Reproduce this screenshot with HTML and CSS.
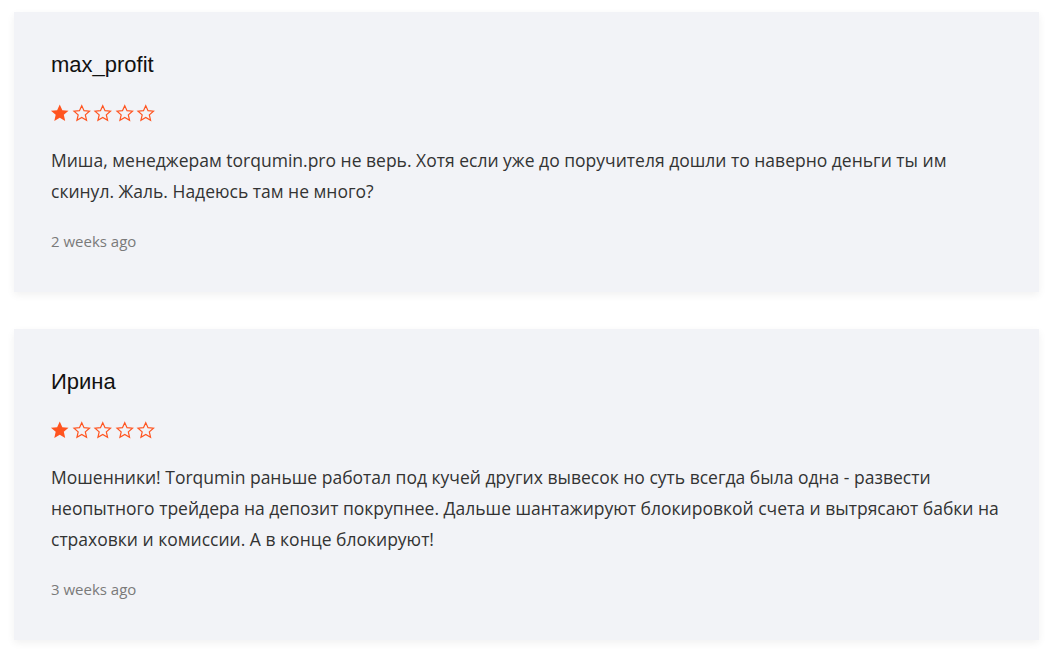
FILE: index.html
```html
<!DOCTYPE html>
<html lang="ru">
<head>
<meta charset="utf-8">
<link rel="stylesheet" href="styles.css">
</head>
<body>
<div class="reviews">
  <div class="card">
    <div class="name">max_profit</div>
    <div class="stars">
      <svg class="star" viewBox="0 0 24 24"><path class="full" d="M12 1.5l3.2 7 7.6.7-5.8 5.1 1.7 7.5L12 17.9l-6.7 3.9 1.7-7.5-5.8-5.1 7.6-.7z"/></svg>
      <svg class="star" viewBox="0 0 24 24"><path class="empty" d="M12 3l2.8 6.2 6.7.6-5.1 4.5 1.5 6.6L12 17.5l-5.9 3.4 1.5-6.6-5.1-4.5 6.7-.6z"/></svg>
      <svg class="star" viewBox="0 0 24 24"><path class="empty" d="M12 3l2.8 6.2 6.7.6-5.1 4.5 1.5 6.6L12 17.5l-5.9 3.4 1.5-6.6-5.1-4.5 6.7-.6z"/></svg>
      <svg class="star" viewBox="0 0 24 24"><path class="empty" d="M12 3l2.8 6.2 6.7.6-5.1 4.5 1.5 6.6L12 17.5l-5.9 3.4 1.5-6.6-5.1-4.5 6.7-.6z"/></svg>
      <svg class="star" viewBox="0 0 24 24"><path class="empty" d="M12 3l2.8 6.2 6.7.6-5.1 4.5 1.5 6.6L12 17.5l-5.9 3.4 1.5-6.6-5.1-4.5 6.7-.6z"/></svg>
    </div>
    <p class="text">Миша, менеджерам torqumin.pro не верь. Хотя если уже до поручителя дошли то наверно деньги ты им скинул. Жаль. Надеюсь там не много?</p>
    <div class="time">2 weeks ago</div>
  </div>
  <div class="card">
    <div class="name">Ирина</div>
    <div class="stars">
      <svg class="star" viewBox="0 0 24 24"><path class="full" d="M12 1.5l3.2 7 7.6.7-5.8 5.1 1.7 7.5L12 17.9l-6.7 3.9 1.7-7.5-5.8-5.1 7.6-.7z"/></svg>
      <svg class="star" viewBox="0 0 24 24"><path class="empty" d="M12 3l2.8 6.2 6.7.6-5.1 4.5 1.5 6.6L12 17.5l-5.9 3.4 1.5-6.6-5.1-4.5 6.7-.6z"/></svg>
      <svg class="star" viewBox="0 0 24 24"><path class="empty" d="M12 3l2.8 6.2 6.7.6-5.1 4.5 1.5 6.6L12 17.5l-5.9 3.4 1.5-6.6-5.1-4.5 6.7-.6z"/></svg>
      <svg class="star" viewBox="0 0 24 24"><path class="empty" d="M12 3l2.8 6.2 6.7.6-5.1 4.5 1.5 6.6L12 17.5l-5.9 3.4 1.5-6.6-5.1-4.5 6.7-.6z"/></svg>
      <svg class="star" viewBox="0 0 24 24"><path class="empty" d="M12 3l2.8 6.2 6.7.6-5.1 4.5 1.5 6.6L12 17.5l-5.9 3.4 1.5-6.6-5.1-4.5 6.7-.6z"/></svg>
    </div>
    <p class="text">Мошенники! Torqumin раньше работал под кучей других вывесок но суть всегда была одна - развести неопытного трейдера на депозит покрупнее. Дальше шантажируют блокировкой счета и вытрясают бабки на страховки и комиссии. А в конце блокируют!</p>
    <div class="time">3 weeks ago</div>
  </div>
</div>
</body>
</html>
```

FILE: styles.css
```css
html, body {
  margin: 0;
  padding: 0;
  background: #ffffff;
}

.reviews {
  padding: 12px 14px;
  display: flex;
  flex-direction: column;
  gap: 37px;
}

.card {
  background: #f2f3f7;
  box-shadow: 0 3px 8px rgba(0, 0, 0, 0.06);
  padding: 40px 37px 41px;
  display: flex;
  flex-direction: column;
}

.name {
  font-family: "Liberation Sans", Arial, sans-serif;
  font-size: 22px;
  line-height: 26px;
  color: #111111;
}

.stars {
  display: flex;
  gap: 2px;
  margin-top: 25px;
  margin-left: -1px;
  height: 20px;
}

.star {
  width: 19.5px;
  height: 20px;
  display: block;
}

.star .full {
  fill: #ff5420;
}

.star .empty {
  fill: none;
  stroke: #ff5420;
  stroke-width: 1.5;
  stroke-linejoin: miter;
}

.text {
  margin: 22px 0 0;
  font-family: "Open Sans", sans-serif;
  font-size: 17.5px;
  line-height: 31px;
  color: #333333;
}

.time {
  margin-top: 24px;
  font-family: "Open Sans", sans-serif;
  font-size: 15px;
  line-height: 20px;
  color: #7a7a7a;
}
```
